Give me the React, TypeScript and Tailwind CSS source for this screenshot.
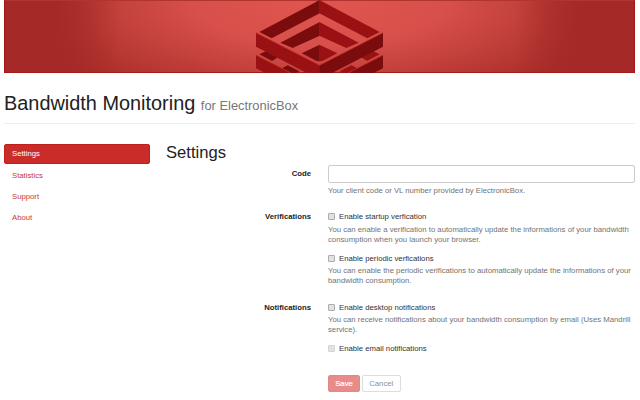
import React from "react";

const leftHalf = (back: string, front: string) => (
  <>
    <path fill={back} d="M239 0V40L95 115L58 96Z" />
    <path fill={back} d="M239 66V107L158 144L121 128Z" />
    <path fill={back} d="M239 134V184L230 183L185 160Z" />
    <path fill={back} d="M58 163L80 152L116 170L96 183Z" />
    <path fill={back} d="M121 207L143 196L178 214L168 219H145Z" />
    <path fill={front} d="M48 98L239 196V219H201L48 140Z" />
    <path fill={front} d="M48 165L153 219H76L48 205Z" />
    <path fill="none" stroke="#c4302e" strokeWidth="2.5" d="M48 98L239 196" />
    <path fill="none" stroke="#c4302e" strokeWidth="2.5" d="M48 165L153 219" />
  </>
);

function Logo() {
  return (
    <svg className="h-[73px] w-[160px]" viewBox="0 0 480 219">
      <g>{leftHalf("#7a0c0e", "#991113")}</g>
      <g transform="translate(477 0) scale(-1 1)">{leftHalf("#991113", "#7a0c0e")}</g>
    </svg>
  );
}

function Check({ label, disabled = false }: { label: string; disabled?: boolean }) {
  return (
    <label className="flex h-[10px] items-center text-[#333]">
      <span
        className={`-mt-px mr-1 h-[7px] w-[7px] rounded-[1px] border bg-[#e2e2e2] ${
          disabled ? "border-[#d4d4d4]" : "border-[#acacac]"
        }`}
      />
      {label}
    </label>
  );
}

function Row({ label, children }: { label: React.ReactNode; children: React.ReactNode }) {
  return (
    <div className="flex">
      <div className="w-[145px] text-right font-bold text-[#222]">{label}</div>
      <div className="ml-[17px] w-[307px] text-[#737373]">{children}</div>
    </div>
  );
}

export default function App() {
  return (
    <div className="h-[400px] w-[640px] overflow-hidden bg-white pl-1 font-['Liberation_Sans',Arial,sans-serif] text-[7.74px] leading-[10px] whitespace-nowrap">
      <header className="h-[73px] w-[631px] border-x border-t border-b border-x-[#a31414] border-t-[#b13431] border-b-[#a31a18] bg-[linear-gradient(90deg,#a52a27_0px,#a52a27_50px,rgba(165,42,39,0.75)_72px,rgba(165,42,39,0)_115px,rgba(165,42,39,0)_510px,rgba(165,42,39,0.75)_553px,#a52a27_575px,#a52a27_631px),radial-gradient(ellipse_310px_110px_at_50%_0%,#e05550_0%,#d8504b_40%,#a82c28_100%)]">
        <div className="-mt-px pl-[235px]">
          <Logo />
        </div>
      </header>
      <div className="flex h-[51px] w-[631px] items-baseline border-b border-[#eeeeee] pt-[18px] text-[#222]">
        <h1 className="text-[19.9px] leading-[24px]">Bandwidth Monitoring</h1>
        <small className="ml-[5.5px] text-[12.9px] text-[#777]">for ElectronicBox</small>
      </div>
      <div className="flex pt-5">
        <nav className="w-[146px] text-[#c43b39]">
          <div className="mb-px h-5 rounded-[2px] border border-[#c11f1c] bg-[#c92c29] pl-[7px] leading-[18px] text-white">Settings</div>
          <div className="mb-px h-5 pl-2 leading-[21px]">Statistics</div>
          <div className="mb-px h-5 pl-2 leading-[21px]">Support</div>
          <div className="h-5 pl-2 leading-[21px]">About</div>
        </nav>
        <main className="ml-4 w-[469px]">
          <h2 className="h-[21px] text-[16.6px] leading-[17px] text-[#222]">Settings</h2>
          <Row label={<span className="block pt-1">Code</span>}>
            <div className="h-[18px] rounded-[2px] border border-[#ccc]" />
            <p className="pt-[3px]">Your client code or VL number provided by ElectronicBox.</p>
          </Row>
          <div className="h-[16px]" />
          <Row label="Verifications">
            <Check label="Enable startup verfication" />
            <p className="pt-[3px]">
              You can enable a verification to automatically update the informations of your bandwidth<br />
              consumption when you launch your browser.
            </p>
            <div className="h-[9px]" />
            <Check label="Enable periodic verfications" />
            <p className="pt-[2px]">
              You can enable the periodic verifications to automatically update the informations of your<br />
              bandwidth consumption.
            </p>
          </Row>
          <div className="h-[17px]" />
          <Row label="Notifications">
            <Check label="Enable desktop notifications" />
            <p className="pt-[2px]">
              You can receive notifications about your bandwidth consumption by email (Uses Mandrill<br />
              service).
            </p>
            <div className="h-[9px]" />
            <Check label="Enable email notifications" disabled />
            <div className="mt-[21px] flex gap-[2px] leading-[16px]">
              <button className="h-[17px] w-8 rounded-[2px] border border-[#e68785] bg-[#e98b89] text-white [-webkit-text-stroke:0.2px_white]">Save</button>
              <button className="h-[17px] w-[38.5px] rounded-[2px] border border-[#ddd] text-[#909090]">Cancel</button>
            </div>
          </Row>
        </main>
      </div>
    </div>
  );
}
